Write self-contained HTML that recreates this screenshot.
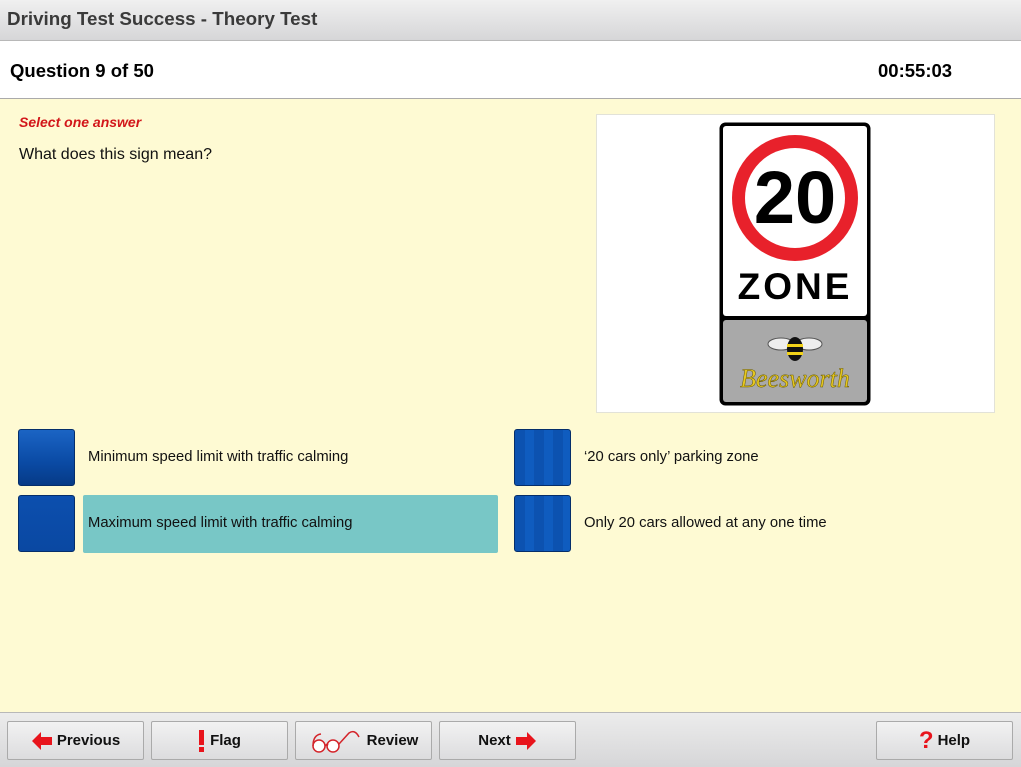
<!DOCTYPE html>
<html><head><style>
*{margin:0;padding:0;box-sizing:border-box}
body{width:1021px;height:767px;overflow:hidden;font-family:"Liberation Sans",Arial,sans-serif;background:#fefad3;position:relative}
.title{position:absolute;left:0;top:0;width:1021px;height:41px;background:linear-gradient(#f0f0f0,#d6d6d8);border-bottom:1px solid #b8b8b8}
.title span{position:absolute;left:7px;top:8px;font-size:18.8px;font-weight:bold;color:#3a3a3a}
.hdr{position:absolute;left:0;top:41px;width:1021px;height:58px;background:#fff;border-bottom:1px solid #aaa}
.hdr b{position:absolute;top:19px;font-size:18.5px;color:#000}
.sel{position:absolute;left:19px;top:114px;font-size:14px;font-weight:bold;font-style:italic;color:#d2161a}
.q{position:absolute;left:19px;top:146px;font-size:16px;color:#111}
.img{position:absolute;left:596px;top:114px;width:399px;height:299px;background:#fff;border:1px solid #e2e2d8}
.box{position:absolute;width:57px;height:57px;border-radius:3px;background:linear-gradient(#1b64c4,#0a4aa4 60%,#063a86);border:1px solid #052e6a}
.box.s{background:repeating-linear-gradient(90deg,#0c52b0 0 10px,#0f5cbf 10px 19px),#0a4aa4}
.opt{position:absolute;font-size:14.8px;color:#111}
.teal{position:absolute;left:83px;top:495px;width:415px;height:58px;background:#78c7c6;border-radius:2px}
.foot{position:absolute;left:0;top:712px;width:1021px;height:55px;background:linear-gradient(#ececec,#d6d6d8);border-top:1px solid #b8b8b8}
.btn{position:absolute;top:721px;width:137px;height:39px;border:1px solid #aaa;border-radius:2px;background:linear-gradient(#f2f2f2,#dcdcde);font-size:15px;font-weight:bold;color:#111;display:flex;align-items:center;justify-content:center;gap:4px}
</style></head><body>
<div class="title"><span>Driving Test Success - Theory Test</span></div>
<div class="hdr"><b style="left:10px">Question 9 of 50</b><b style="left:878px">00:55:03</b></div>
<div class="sel">Select one answer</div>
<div class="q">What does this sign mean?</div>
<div class="img">
<svg width="399" height="299" viewBox="0 0 399 299">
<rect x="122.5" y="7.5" width="151" height="283" rx="6" fill="#000"/>
<rect x="126" y="11" width="144" height="190" rx="3" fill="#fff"/>
<rect x="126" y="205" width="144" height="82" rx="3" fill="#a9a9a9"/>
<circle cx="198" cy="83" r="63" fill="#e8212b"/>
<circle cx="198" cy="83" r="50" fill="#fff"/>
<text x="198" y="108" text-anchor="middle" font-family="Liberation Sans" font-weight="bold" font-size="74" fill="#000">20</text>
<text x="198" y="184" text-anchor="middle" font-family="Liberation Sans" font-weight="bold" font-size="37" fill="#000" letter-spacing="3">ZONE</text>
<ellipse cx="184" cy="229" rx="13" ry="6" fill="#eee" stroke="#555"/>
<ellipse cx="212" cy="229" rx="13" ry="6" fill="#eee" stroke="#555"/>
<ellipse cx="198" cy="234" rx="8" ry="12" fill="#111"/>
<rect x="190" y="229" width="16" height="3" fill="#f2d21a"/>
<rect x="190" y="237" width="16" height="3" fill="#f2d21a"/>
<text x="198" y="272" text-anchor="middle" font-family="Liberation Serif" font-style="italic" font-size="26" fill="#e6c820" stroke="#6a5a00" stroke-width="0.5">Beesworth</text>
</svg></div>
<div class="box" style="left:18px;top:429px"></div>
<div class="opt" style="left:88px;top:449px">Minimum speed limit with traffic calming</div>
<div class="teal"></div>
<div class="box" style="left:18px;top:495px;background:linear-gradient(#0c4fae,#0a48a2)"></div>
<div class="opt" style="left:88px;top:515px">Maximum speed limit with traffic calming</div>
<div class="box s" style="left:514px;top:429px"></div>
<div class="opt" style="left:584px;top:449px">‘20 cars only’ parking zone</div>
<div class="box s" style="left:514px;top:495px"></div>
<div class="opt" style="left:584px;top:515px">Only 20 cars allowed at any one time</div>
<div class="foot"></div>
<div class="btn" style="left:7px"><svg width="22" height="20"><path d="M1 10 L10 1 V6 H21 V14 H10 V19 Z" fill="#e8141c"/></svg>Previous</div>
<div class="btn" style="left:151px"><svg width="8" height="22"><rect x="1" y="0" width="5" height="15" fill="#e8141c"/><rect x="1" y="17" width="5" height="5" fill="#e8141c"/></svg>Flag</div>
<div class="btn" style="left:295px"><svg width="54" height="24"><g fill="#fff" stroke="#d4242a" stroke-width="1.5"><circle cx="10" cy="17" r="6"/><circle cx="24" cy="17" r="6"/><path d="M4 17 Q4 6 12 5 M16 17 Q20 13 18 17 M30 15 L40 4 Q46 0 50 8" fill="none"/></g></svg>Review</div>
<div class="btn" style="left:439px">Next <svg width="22" height="20"><path d="M21 10 L12 1 V6 H1 V14 H12 V19 Z" fill="#e8141c"/></svg></div>
<div class="btn" style="left:876px"><span style="color:#e8141c;font-size:24px;font-weight:bold">?</span>Help</div>
</body></html>
